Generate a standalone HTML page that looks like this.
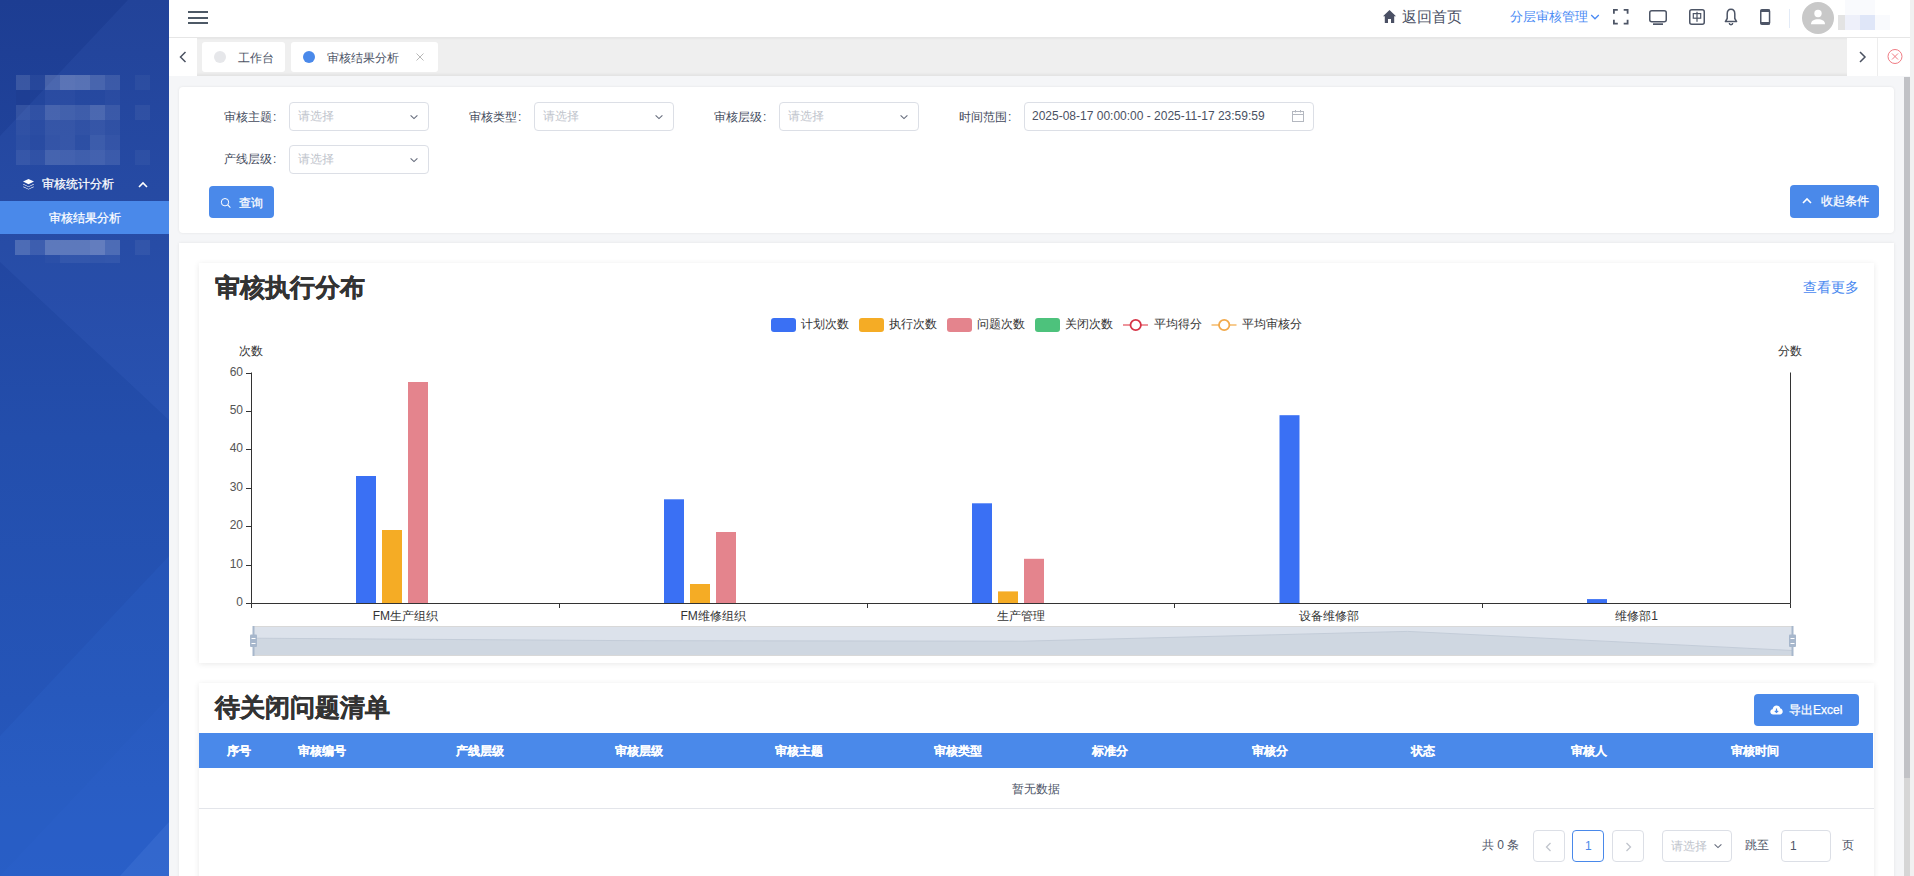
<!DOCTYPE html>
<html><head><meta charset="utf-8">
<style>
*{box-sizing:border-box;margin:0;padding:0}
html,body{width:1914px;height:876px;overflow:hidden;background:#f5f6f8;font-family:"Liberation Sans",sans-serif;}
.a{position:absolute}
.t12{font-size:12px;line-height:14px;white-space:nowrap}
.sel{position:absolute;height:29px;border:1px solid #dcdfe6;border-radius:4px;background:#fff}
.sel .ph{position:absolute;left:8px;top:6px;font-size:12px;line-height:14px;color:#c0c4cc}
.lbl{position:absolute;font-size:12px;line-height:14px;color:#434a5c;white-space:nowrap}
.btn{position:absolute;background:#4a89ea;border-radius:4px;color:#fff;-webkit-text-stroke:0.25px #fff}
.th{position:absolute;top:745px;font-size:12px;line-height:13px;color:#fff;font-weight:bold;white-space:nowrap;-webkit-text-stroke:0.1px #fff}
.pb{position:absolute;top:830px;height:32px;border:1px solid #dcdfe6;border-radius:4px;background:#fff}
</style></head><body>

<!-- SIDEBAR -->
<div class="a" id="sb" style="left:0;top:0;width:169px;height:876px;overflow:hidden;background:linear-gradient(180deg,#1d3d92 0%,#2246a0 28%,#234eac 50%,#2555b8 80%,#275bc2 100%)">

<svg class="a" style="left:0;top:0" width="169" height="876" viewBox="0 0 169 876">
<polygon points="128,0 169,0 169,420 0,262 0,136" fill="rgba(110,160,255,0.07)"/>
<polygon points="169,556 169,876 0,876 0,736" fill="rgba(70,140,255,0.08)"/>
<polygon points="169,697 169,876 0,876" fill="rgba(70,140,255,0.04)"/>
<polygon points="169,822 169,876 120,876" fill="rgba(120,170,255,0.12)"/>
</svg>
<div class="a" style="left:16px;top:75px;width:14px;height:15px;background:rgba(255,255,255,0.12)"></div>
<div class="a" style="left:30px;top:75px;width:15px;height:15px;background:rgba(255,255,255,0.04)"></div>
<div class="a" style="left:45px;top:75px;width:15px;height:15px;background:rgba(255,255,255,0.18)"></div>
<div class="a" style="left:60px;top:75px;width:15px;height:15px;background:rgba(255,255,255,0.25)"></div>
<div class="a" style="left:75px;top:75px;width:15px;height:15px;background:rgba(255,255,255,0.24)"></div>
<div class="a" style="left:90px;top:75px;width:15px;height:15px;background:rgba(255,255,255,0.17)"></div>
<div class="a" style="left:105px;top:75px;width:15px;height:15px;background:rgba(255,255,255,0.11)"></div>
<div class="a" style="left:135px;top:75px;width:15px;height:15px;background:rgba(255,255,255,0.04)"></div>
<div class="a" style="left:16px;top:90px;width:14px;height:15px;background:rgba(0,0,30,0.03)"></div>
<div class="a" style="left:30px;top:90px;width:15px;height:15px;background:rgba(0,0,30,0.01)"></div>
<div class="a" style="left:45px;top:90px;width:15px;height:15px;background:rgba(255,255,255,0.03)"></div>
<div class="a" style="left:60px;top:90px;width:15px;height:15px;background:rgba(255,255,255,0.03)"></div>
<div class="a" style="left:75px;top:90px;width:15px;height:15px;background:rgba(255,255,255,0.01)"></div>
<div class="a" style="left:90px;top:90px;width:15px;height:15px;background:rgba(255,255,255,0.01)"></div>
<div class="a" style="left:105px;top:90px;width:15px;height:15px;background:rgba(255,255,255,0.03)"></div>
<div class="a" style="left:16px;top:105px;width:14px;height:15px;background:rgba(255,255,255,0.09)"></div>
<div class="a" style="left:30px;top:105px;width:15px;height:15px;background:rgba(255,255,255,0.06)"></div>
<div class="a" style="left:45px;top:105px;width:15px;height:15px;background:rgba(255,255,255,0.16)"></div>
<div class="a" style="left:60px;top:105px;width:15px;height:15px;background:rgba(255,255,255,0.14)"></div>
<div class="a" style="left:75px;top:105px;width:15px;height:15px;background:rgba(255,255,255,0.12)"></div>
<div class="a" style="left:90px;top:105px;width:15px;height:15px;background:rgba(255,255,255,0.18)"></div>
<div class="a" style="left:105px;top:105px;width:15px;height:15px;background:rgba(255,255,255,0.1)"></div>
<div class="a" style="left:135px;top:105px;width:15px;height:15px;background:rgba(255,255,255,0.05)"></div>
<div class="a" style="left:16px;top:120px;width:14px;height:15px;background:rgba(255,255,255,0.05)"></div>
<div class="a" style="left:30px;top:120px;width:15px;height:15px;background:rgba(255,255,255,0.03)"></div>
<div class="a" style="left:45px;top:120px;width:15px;height:15px;background:rgba(255,255,255,0.08)"></div>
<div class="a" style="left:60px;top:120px;width:15px;height:15px;background:rgba(255,255,255,0.08)"></div>
<div class="a" style="left:75px;top:120px;width:15px;height:15px;background:rgba(255,255,255,0.06)"></div>
<div class="a" style="left:90px;top:120px;width:15px;height:15px;background:rgba(255,255,255,0.08)"></div>
<div class="a" style="left:105px;top:120px;width:15px;height:15px;background:rgba(255,255,255,0.05)"></div>
<div class="a" style="left:16px;top:135px;width:14px;height:15px;background:rgba(255,255,255,0.04)"></div>
<div class="a" style="left:30px;top:135px;width:15px;height:15px;background:rgba(255,255,255,0.02)"></div>
<div class="a" style="left:45px;top:135px;width:15px;height:15px;background:rgba(255,255,255,0.07)"></div>
<div class="a" style="left:60px;top:135px;width:15px;height:15px;background:rgba(255,255,255,0.08)"></div>
<div class="a" style="left:75px;top:135px;width:15px;height:15px;background:rgba(255,255,255,0.04)"></div>
<div class="a" style="left:90px;top:135px;width:15px;height:15px;background:rgba(255,255,255,0.11)"></div>
<div class="a" style="left:105px;top:135px;width:15px;height:15px;background:rgba(255,255,255,0.07)"></div>
<div class="a" style="left:16px;top:150px;width:14px;height:15px;background:rgba(255,255,255,0.08)"></div>
<div class="a" style="left:30px;top:150px;width:15px;height:15px;background:rgba(255,255,255,0.05)"></div>
<div class="a" style="left:45px;top:150px;width:15px;height:15px;background:rgba(255,255,255,0.15)"></div>
<div class="a" style="left:60px;top:150px;width:15px;height:15px;background:rgba(255,255,255,0.14)"></div>
<div class="a" style="left:75px;top:150px;width:15px;height:15px;background:rgba(255,255,255,0.12)"></div>
<div class="a" style="left:90px;top:150px;width:15px;height:15px;background:rgba(255,255,255,0.14)"></div>
<div class="a" style="left:105px;top:150px;width:15px;height:15px;background:rgba(255,255,255,0.1)"></div>
<div class="a" style="left:135px;top:150px;width:15px;height:15px;background:rgba(255,255,255,0.04)"></div>
<div class="a" style="left:15px;top:240px;width:15px;height:15px;background:rgba(255,255,255,0.18)"></div>
<div class="a" style="left:30px;top:240px;width:15px;height:15px;background:rgba(255,255,255,0.1)"></div>
<div class="a" style="left:45px;top:240px;width:15px;height:15px;background:rgba(255,255,255,0.25)"></div>
<div class="a" style="left:60px;top:240px;width:15px;height:15px;background:rgba(255,255,255,0.25)"></div>
<div class="a" style="left:75px;top:240px;width:15px;height:15px;background:rgba(255,255,255,0.25)"></div>
<div class="a" style="left:90px;top:240px;width:15px;height:15px;background:rgba(255,255,255,0.28)"></div>
<div class="a" style="left:105px;top:240px;width:15px;height:15px;background:rgba(255,255,255,0.18)"></div>
<div class="a" style="left:135px;top:240px;width:15px;height:15px;background:rgba(255,255,255,0.05)"></div>
<div class="a" style="left:45px;top:255px;width:15px;height:8px;background:rgba(255,255,255,0.02)"></div>
<div class="a" style="left:60px;top:255px;width:15px;height:8px;background:rgba(255,255,255,0.06)"></div>
<div class="a" style="left:75px;top:255px;width:15px;height:8px;background:rgba(255,255,255,0.06)"></div>
<div class="a" style="left:90px;top:255px;width:15px;height:8px;background:rgba(255,255,255,0.05)"></div>
<div class="a" style="left:105px;top:255px;width:15px;height:8px;background:rgba(255,255,255,0.06)"></div>
<svg class="a" style="left:22px;top:178px" width="13" height="13" viewBox="0 0 13 13"><path d="M6.5 1 L12 3.6 L6.5 6.2 L1 3.6 Z" fill="#fff"/><path d="M1.6 6.1 L6.5 8.4 L11.4 6.1 L12 6.5 L6.5 9.1 L1 6.5 Z" fill="#fff"/><path d="M1.6 8.6 L6.5 10.9 L11.4 8.6 L12 9 L6.5 11.6 L1 9 Z" fill="#fff"/></svg>
<div class="a t12" style="left:42px;top:177px;color:#fff;-webkit-text-stroke:0.25px #fff">审核统计分析</div>
<svg class="a" style="left:137px;top:180px" width="12" height="10" viewBox="0 0 12 10"><path d="M2 7 L6 3 L10 7" fill="none" stroke="#fff" stroke-width="1.6"/></svg>
<div class="a" style="left:0;top:201px;width:169px;height:33px;background:#4a89ea"></div>
<div class="a t12" style="left:49px;top:211px;color:#fff;-webkit-text-stroke:0.25px #fff">审核结果分析</div>
</div>

<!-- HEADER -->
<div class="a" style="left:169px;top:0;width:1741px;height:38px;background:#fff;border-bottom:1px solid #e6e6e6"></div>
<div class="a" style="left:1910px;top:0;width:4px;height:876px;background:#f1f1f1"></div>

<!-- TABS BAR -->
<div class="a" style="left:169px;top:38px;width:1741px;height:38px;background:#efefef;box-shadow:inset 0 1px 2px rgba(0,0,0,0.04), inset 0 -2px 3px rgba(0,0,0,0.05)"></div>
<div class="a" style="left:169px;top:38px;width:28px;height:38px;background:#fff"></div>
<div class="a" style="left:1847px;top:38px;width:63px;height:38px;background:#fff"></div>
<div class="a" style="left:1877px;top:38px;width:1px;height:38px;background:#ededed"></div>


<!-- header content -->
<div class="a" style="left:188px;top:11px;width:20px;height:2px;background:#4d5966"></div>
<div class="a" style="left:188px;top:17px;width:20px;height:2px;background:#4d5966"></div>
<div class="a" style="left:188px;top:22px;width:20px;height:2px;background:#4d5966"></div>

<svg class="a" style="left:1382px;top:9px" width="15" height="15" viewBox="0 0 15 15"><path d="M7.5 1 L14 7.3 L12.2 7.3 L12.2 14 L9 14 L9 10 L6 10 L6 14 L2.8 14 L2.8 7.3 L1 7.3 Z" fill="#4a5064"/></svg>
<div class="a" style="left:1402px;top:8px;font-size:15px;line-height:18px;color:#4a5064;white-space:nowrap">返回首页</div>
<div class="a" style="left:1510px;top:9px;font-size:13px;line-height:16px;color:#4a8af4;white-space:nowrap">分层审核管理</div>
<svg class="a" style="left:1590px;top:13px" width="10" height="8" viewBox="0 0 10 8"><path d="M1.2 2 L5 5.8 L8.8 2" fill="none" stroke="#4a8af4" stroke-width="1.3"/></svg>

<svg class="a" style="left:1612px;top:8px" width="18" height="18" viewBox="0 0 18 18"><path d="M1.9 5.8 V1.9 H5.8 M11.7 1.9 H15.6 V5.8 M15.6 11.7 V15.6 H11.7 M5.8 15.6 H1.9 V11.7" fill="none" stroke="#4d5566" stroke-width="1.8"/></svg>
<svg class="a" style="left:1648px;top:9px" width="20" height="17" viewBox="0 0 20 17"><rect x="1.75" y="1.75" width="16.5" height="11" rx="2" fill="none" stroke="#4d5566" stroke-width="1.5"/><rect x="5" y="14.3" width="10" height="1.7" fill="#4d5566"/></svg>
<svg class="a" style="left:1688px;top:8px" width="18" height="18" viewBox="0 0 18 18"><rect x="1.75" y="1.75" width="14.5" height="14.5" rx="2" fill="none" stroke="#4d5566" stroke-width="1.5"/><rect x="5.3" y="5.6" width="7.4" height="4.6" fill="none" stroke="#4d5566" stroke-width="1.2"/><rect x="8.4" y="3.8" width="1.2" height="10" fill="#4d5566"/></svg>
<svg class="a" style="left:1724px;top:8px" width="15" height="18" viewBox="0 0 15 18"><path d="M7 1.2 C4.3 1.2 3.2 3.6 3.2 6 L3.2 10.5 L1.4 13.6 L12.6 13.6 L10.8 10.5 L10.8 6 C10.8 3.6 9.7 1.2 7 1.2 Z" fill="none" stroke="#4d5566" stroke-width="1.5" stroke-linejoin="round"/><path d="M5.3 15 A1.7 1.7 0 0 0 8.7 15" fill="none" stroke="#4d5566" stroke-width="1.4"/></svg>
<svg class="a" style="left:1759px;top:8px" width="13" height="18" viewBox="0 0 13 18"><rect x="1.75" y="1.75" width="8.8" height="14.5" rx="1.5" fill="none" stroke="#4d5566" stroke-width="1.5"/><rect x="1.5" y="1.5" width="9.3" height="2.5" fill="#4d5566"/><rect x="1.5" y="14" width="9.3" height="2.5" fill="#4d5566"/></svg>
<div class="a" style="left:1789px;top:9px;width:1px;height:19px;background:#e3ebf7"></div>
<svg class="a" style="left:1802px;top:2px" width="32" height="32" viewBox="0 0 32 32"><circle cx="16" cy="16" r="16" fill="#c8c8c8"/><circle cx="16" cy="11.5" r="3.7" fill="#fff"/><path d="M9 22.2 C9 18.6 12 17.2 16 17.2 C20 17.2 23 18.6 23 22.2 Z" fill="#fff"/></svg>
<div class="a" style="left:1845px;top:0;width:30px;height:15px;background:#f9fafd"></div>
<div class="a" style="left:1838px;top:15px;width:7px;height:15px;background:#e3e3e3"></div>
<div class="a" style="left:1845px;top:15px;width:15px;height:15px;background:#eef0fa"></div>
<div class="a" style="left:1860px;top:15px;width:15px;height:15px;background:#dfe6f8"></div>
<div class="a" style="left:1875px;top:15px;width:15px;height:15px;background:#f9fafd"></div>

<!-- tabs content -->
<svg class="a" style="left:176px;top:49px" width="14" height="16" viewBox="0 0 14 16"><path d="M9.5 3 L4.5 8 L9.5 13" fill="none" stroke="#4b5261" stroke-width="1.5"/></svg>
<div class="a" style="left:202px;top:42px;width:83px;height:30px;background:#fff;border-radius:3px"></div>
<div class="a" style="left:214px;top:51px;width:12px;height:12px;border-radius:50%;background:#e6e7ea"></div>
<div class="a t12" style="left:238px;top:51px;color:#4c5366">工作台</div>
<div class="a" style="left:291px;top:42px;width:147px;height:30px;background:#fff;border-radius:3px"></div>
<div class="a" style="left:303px;top:51px;width:12px;height:12px;border-radius:50%;background:#4a89ea"></div>
<div class="a t12" style="left:327px;top:51px;color:#4c5366">审核结果分析</div>
<svg class="a" style="left:414px;top:51px" width="12" height="12" viewBox="0 0 12 12"><path d="M2.5 2.5 L9.5 9.5 M9.5 2.5 L2.5 9.5" stroke="#b0b0b0" stroke-width="0.9"/></svg>
<svg class="a" style="left:1855px;top:49px" width="14" height="16" viewBox="0 0 14 16"><path d="M5 3 L10 8 L5 13" fill="none" stroke="#4b5261" stroke-width="1.5"/></svg>
<svg class="a" style="left:1886px;top:48px" width="18" height="18" viewBox="0 0 18 18"><circle cx="9" cy="8.5" r="7" fill="none" stroke="#f07c84" stroke-width="1"/><path d="M6 5.5 L12 11.5 M12 5.5 L6 11.5" stroke="#f07c84" stroke-width="1"/></svg>

<!-- content bg -->
<div class="a" style="left:169px;top:76px;width:1741px;height:800px;background:#f5f6f8"></div>

<!-- scrollbar -->
<div class="a" style="left:1904px;top:77px;width:6px;height:799px;background:#d6d6d6"></div>
<div class="a" style="left:1904px;top:77px;width:6px;height:701px;background:#c1c2c6"></div>

<!-- FILTER CARD -->
<div class="a" style="left:179px;top:87px;width:1715px;height:146px;background:#fff;border-radius:4px;box-shadow:0 0 3px rgba(0,0,0,0.08)"></div>


<!-- filter content -->
<div class="lbl" style="left:224px;top:110px">审核主题<span style="margin-left:1px">:</span></div>
<div class="sel" style="left:289px;top:102px;width:140px"><div class="ph">请选择</div><svg class="a" style="left:119px;top:11px" width="10" height="7" viewBox="0 0 10 7"><path d="M1.6 1.4 L5 4.6 L8.4 1.4" fill="none" stroke="#656b7b" stroke-width="1.1"/></svg></div>
<div class="lbl" style="left:469px;top:110px">审核类型<span style="margin-left:1px">:</span></div>
<div class="sel" style="left:534px;top:102px;width:140px"><div class="ph">请选择</div><svg class="a" style="left:119px;top:11px" width="10" height="7" viewBox="0 0 10 7"><path d="M1.6 1.4 L5 4.6 L8.4 1.4" fill="none" stroke="#656b7b" stroke-width="1.1"/></svg></div>
<div class="lbl" style="left:714px;top:110px">审核层级<span style="margin-left:1px">:</span></div>
<div class="sel" style="left:779px;top:102px;width:140px"><div class="ph">请选择</div><svg class="a" style="left:119px;top:11px" width="10" height="7" viewBox="0 0 10 7"><path d="M1.6 1.4 L5 4.6 L8.4 1.4" fill="none" stroke="#656b7b" stroke-width="1.1"/></svg></div>
<div class="lbl" style="left:959px;top:110px">时间范围<span style="margin-left:1px">:</span></div>
<div class="sel" style="left:1024px;top:102px;width:290px"><div class="a t12" style="left:7px;top:6px;color:#4a5163">2025-08-17 00:00:00 - 2025-11-17 23:59:59</div>
<svg class="a" style="left:266px;top:6px" width="14" height="14" viewBox="0 0 14 14"><rect x="1.5" y="2.5" width="11" height="10" fill="none" stroke="#b4b8c0" stroke-width="1"/><path d="M1.5 5.5 H12.5 M4.5 1 V3.5 M9.5 1 V3.5" stroke="#b4b8c0" stroke-width="1"/></svg></div>
<div class="lbl" style="left:224px;top:152px">产线层级<span style="margin-left:1px">:</span></div>
<div class="sel" style="left:289px;top:145px;width:140px"><div class="ph">请选择</div><svg class="a" style="left:119px;top:11px" width="10" height="7" viewBox="0 0 10 7"><path d="M1.6 1.4 L5 4.6 L8.4 1.4" fill="none" stroke="#656b7b" stroke-width="1.1"/></svg></div>

<div class="btn" style="left:209px;top:186px;width:65px;height:32px"><svg class="a" style="left:11px;top:11px" width="12" height="12" viewBox="0 0 12 12"><circle cx="5" cy="5.2" r="3.7" fill="none" stroke="#fff" stroke-width="1"/><path d="M7.7 7.9 L10.4 10.6" stroke="#fff" stroke-width="1.1"/></svg><div class="a t12" style="left:30px;top:10px">查询</div></div>
<div class="btn" style="left:1790px;top:185px;width:89px;height:33px"><svg class="a" style="left:11px;top:11px" width="12" height="10" viewBox="0 0 12 10"><path d="M2 7 L6 3 L10 7" fill="none" stroke="#fff" stroke-width="1.6"/></svg><div class="a t12" style="left:31px;top:9px">收起条件</div></div>

<!-- OUTER CARD -->
<div class="a" style="left:179px;top:243px;width:1715px;height:640px;background:#fff;box-shadow:0 0 3px rgba(0,0,0,0.08)"></div>

<!-- CHART CARD -->
<div class="a" style="left:199px;top:263px;width:1675px;height:400px;background:#fff;box-shadow:0 1px 6px rgba(0,0,0,0.09)"></div>

<!-- chart content -->
<div class="a" style="left:215px;top:273px;font-size:24.6px;line-height:30px;font-weight:bold;color:#333;white-space:nowrap;-webkit-text-stroke:0.4px #333">审核执行分布</div>
<div class="a" style="left:1803px;top:279px;font-size:14px;line-height:17px;color:#4a89f0;white-space:nowrap">查看更多</div>
<svg class="a" style="left:0;top:0" width="1914" height="876" viewBox="0 0 1914 876" font-family="Liberation Sans, sans-serif">
<rect x="771" y="318" width="25" height="14" rx="3" fill="#3a70f4"/>
<text x="801" y="328" font-size="12" fill="#333">计划次数</text>
<rect x="859" y="318" width="25" height="14" rx="3" fill="#f5ac25"/>
<text x="889" y="328" font-size="12" fill="#333">执行次数</text>
<rect x="947" y="318" width="25" height="14" rx="3" fill="#e4848d"/>
<text x="977" y="328" font-size="12" fill="#333">问题次数</text>
<rect x="1035" y="318" width="25" height="14" rx="3" fill="#4dc27c"/>
<text x="1065" y="328" font-size="12" fill="#333">关闭次数</text>
<line x1="1123" y1="325" x2="1148" y2="325" stroke="#ee959c" stroke-width="2"/>
<circle cx="1135.7" cy="325" r="5.2" fill="#fff" stroke="#d63447" stroke-width="1.8"/>
<text x="1153.5" y="328" font-size="12" fill="#333">平均得分</text>
<line x1="1211.5" y1="325" x2="1236.5" y2="325" stroke="#f7cb8f" stroke-width="2"/>
<circle cx="1224.2" cy="325" r="5.2" fill="#fff" stroke="#f2a94a" stroke-width="1.8"/>
<text x="1242.0" y="328" font-size="12" fill="#333">平均审核分</text>
<text x="239" y="355" font-size="12" fill="#333">次数</text>
<text x="1778" y="355" font-size="12" fill="#333">分数</text>
<line x1="251.5" y1="372.5" x2="251.5" y2="603.5" stroke="#333" stroke-width="1"/>
<line x1="1790.5" y1="372.5" x2="1790.5" y2="603.5" stroke="#333" stroke-width="1"/>
<line x1="246" y1="603.5" x2="251.5" y2="603.5" stroke="#333" stroke-width="1"/>
<text x="243" y="605.5" font-size="12" fill="#555" text-anchor="end">0</text>
<line x1="246" y1="565.5" x2="251.5" y2="565.5" stroke="#333" stroke-width="1"/>
<text x="243" y="567.5" font-size="12" fill="#555" text-anchor="end">10</text>
<line x1="246" y1="526.5" x2="251.5" y2="526.5" stroke="#333" stroke-width="1"/>
<text x="243" y="528.5" font-size="12" fill="#555" text-anchor="end">20</text>
<line x1="246" y1="488.5" x2="251.5" y2="488.5" stroke="#333" stroke-width="1"/>
<text x="243" y="490.5" font-size="12" fill="#555" text-anchor="end">30</text>
<line x1="246" y1="449.5" x2="251.5" y2="449.5" stroke="#333" stroke-width="1"/>
<text x="243" y="451.5" font-size="12" fill="#555" text-anchor="end">40</text>
<line x1="246" y1="411.5" x2="251.5" y2="411.5" stroke="#333" stroke-width="1"/>
<text x="243" y="413.5" font-size="12" fill="#555" text-anchor="end">50</text>
<line x1="246" y1="373.5" x2="251.5" y2="373.5" stroke="#333" stroke-width="1"/>
<text x="243" y="375.5" font-size="12" fill="#555" text-anchor="end">60</text>
<line x1="251.5" y1="603.5" x2="1790.5" y2="603.5" stroke="#333" stroke-width="1"/>
<line x1="251.5" y1="603.5" x2="251.5" y2="608" stroke="#333" stroke-width="1"/>
<line x1="559.5" y1="603.5" x2="559.5" y2="608" stroke="#333" stroke-width="1"/>
<line x1="867.5" y1="603.5" x2="867.5" y2="608" stroke="#333" stroke-width="1"/>
<line x1="1174.5" y1="603.5" x2="1174.5" y2="608" stroke="#333" stroke-width="1"/>
<line x1="1482.5" y1="603.5" x2="1482.5" y2="608" stroke="#333" stroke-width="1"/>
<line x1="1790.5" y1="603.5" x2="1790.5" y2="608" stroke="#333" stroke-width="1"/>
<text x="405.4" y="620" font-size="12" fill="#333" text-anchor="middle">FM生产组织</text>
<text x="713.2" y="620" font-size="12" fill="#333" text-anchor="middle">FM维修组织</text>
<text x="1021.0" y="620" font-size="12" fill="#333" text-anchor="middle">生产管理</text>
<text x="1328.8000000000002" y="620" font-size="12" fill="#333" text-anchor="middle">设备维修部</text>
<text x="1636.6" y="620" font-size="12" fill="#333" text-anchor="middle">维修部1</text>
<rect x="356" y="476" width="20" height="127" fill="#3a70f4"/>
<rect x="382" y="530" width="20" height="73" fill="#f5ac25"/>
<rect x="408" y="382" width="20" height="221" fill="#e4848d"/>
<rect x="664" y="499.3" width="20" height="103.69999999999999" fill="#3a70f4"/>
<rect x="690" y="584" width="20" height="19" fill="#f5ac25"/>
<rect x="716" y="532" width="20" height="71" fill="#e4848d"/>
<rect x="972" y="503.3" width="20" height="99.69999999999999" fill="#3a70f4"/>
<rect x="998" y="591.4" width="20" height="11.600000000000023" fill="#f5ac25"/>
<rect x="1024" y="558.8" width="20" height="44.200000000000045" fill="#e4848d"/>
<rect x="1279.5" y="415.2" width="20" height="187.8" fill="#3a70f4"/>
<rect x="1587" y="599.1" width="20" height="3.8999999999999773" fill="#3a70f4"/>
<rect x="253" y="626" width="1539.5" height="30" fill="#dce2eb"/>
<path d="M253,656 L253,638.2 L637.9,640.7 L1022.7,641.2 L1407.6,631.4 L1792.5,650.5 L1792.5,656 Z" fill="#cfd7e1"/>
<path d="M253,638.2 L637.9,640.7 L1022.7,641.2 L1407.6,631.4 L1792.5,650.5" fill="none" stroke="#c3ccd8" stroke-width="1"/>
<line x1="253" y1="626.5" x2="1792.5" y2="626.5" stroke="#d8d8d8" stroke-width="1"/>
<line x1="253" y1="655.5" x2="1792.5" y2="655.5" stroke="#d8d8d8" stroke-width="1"/>
<rect x="252.5" y="626" width="2" height="30" fill="#a7b7cc"/>
<rect x="250.0" y="634.5" width="7" height="12.5" rx="1" fill="#a7b7cc"/>
<rect x="251.5" y="638" width="4" height="1" fill="#fff"/>
<rect x="251.5" y="643" width="4" height="1" fill="#fff"/>
<rect x="1791.5" y="626" width="2" height="30" fill="#a7b7cc"/>
<rect x="1789.0" y="634.5" width="7" height="12.5" rx="1" fill="#a7b7cc"/>
<rect x="1790.5" y="638" width="4" height="1" fill="#fff"/>
<rect x="1790.5" y="643" width="4" height="1" fill="#fff"/>
</svg>

<!-- TABLE CARD -->
<div class="a" style="left:199px;top:683px;width:1675px;height:200px;background:#fff;box-shadow:0 1px 6px rgba(0,0,0,0.09)"></div>

<!-- table content -->
<div class="a" style="left:215px;top:693px;font-size:24.6px;line-height:30px;font-weight:bold;color:#333;white-space:nowrap;-webkit-text-stroke:0.4px #333">待关闭问题清单</div>
<div class="btn" style="left:1754px;top:694px;width:105px;height:32px"><svg class="a" style="left:16px;top:11px" width="13" height="10" viewBox="0 0 13 10"><path d="M3.2 9.5 C1.4 9.5 0.3 8.3 0.3 6.8 C0.3 5.4 1.3 4.4 2.6 4.2 C2.9 2 4.6 0.5 6.6 0.5 C8.5 0.5 10 1.8 10.4 3.6 C11.8 3.8 12.7 5 12.7 6.6 C12.7 8.2 11.6 9.5 10 9.5 Z" fill="#fff"/><path d="M6.5 3.5 V7.3 M4.8 5.8 L6.5 7.5 L8.2 5.8" fill="none" stroke="#4a89ea" stroke-width="1.2"/></svg><div class="a t12" style="left:35px;top:9px">导出Excel</div></div>
<div class="a" style="left:199px;top:733px;width:1674px;height:35px;background:#4a89ea"></div>
<div class="th" style="left:227px">序号</div>
<div class="th" style="left:297.7px">审核编号</div>
<div class="th" style="left:456.3px">产线层级</div>
<div class="th" style="left:615.3px">审核层级</div>
<div class="th" style="left:774.7px">审核主题</div>
<div class="th" style="left:934px">审核类型</div>
<div class="th" style="left:1092px">标准分</div>
<div class="th" style="left:1251.5px">审核分</div>
<div class="th" style="left:1410.5px">状态</div>
<div class="th" style="left:1571px">审核人</div>
<div class="th" style="left:1731px">审核时间</div>
<div class="a t12" style="left:1012px;top:782px;color:#4e5567">暂无数据</div>
<div class="a" style="left:199px;top:808px;width:1675px;height:1px;background:#e3e5ea"></div>
<div class="a t12" style="left:1482px;top:838px;color:#4e5567">共 0 条</div>
<div class="pb" style="left:1533px;width:32px"><svg class="a" style="left:9px;top:10px" width="12" height="12" viewBox="0 0 12 12"><path d="M7.5 2 L3.5 6 L7.5 10" fill="none" stroke="#c0c4cc" stroke-width="1.3"/></svg></div>
<div class="pb" style="left:1572px;width:32px;border-color:#4a89ea"><div class="a t12" style="left:12px;top:8px;color:#4a89ea">1</div></div>
<div class="pb" style="left:1612px;width:32px"><svg class="a" style="left:9px;top:10px" width="12" height="12" viewBox="0 0 12 12"><path d="M4.5 2 L8.5 6 L4.5 10" fill="none" stroke="#c0c4cc" stroke-width="1.3"/></svg></div>
<div class="pb" style="left:1662px;width:70px"><div class="a t12" style="left:8px;top:8px;color:#c0c4cc">请选择</div><svg class="a" style="left:50px;top:12px" width="10" height="7" viewBox="0 0 10 7"><path d="M1.6 1.4 L5 4.6 L8.4 1.4" fill="none" stroke="#656b7b" stroke-width="1.1"/></svg></div>
<div class="a t12" style="left:1745px;top:838px;color:#4e5567">跳至</div>
<div class="pb" style="left:1781px;width:50px"><div class="a t12" style="left:8px;top:8px;color:#4e5567">1</div></div>
<div class="a t12" style="left:1842px;top:838px;color:#4e5567">页</div>
</body></html>
